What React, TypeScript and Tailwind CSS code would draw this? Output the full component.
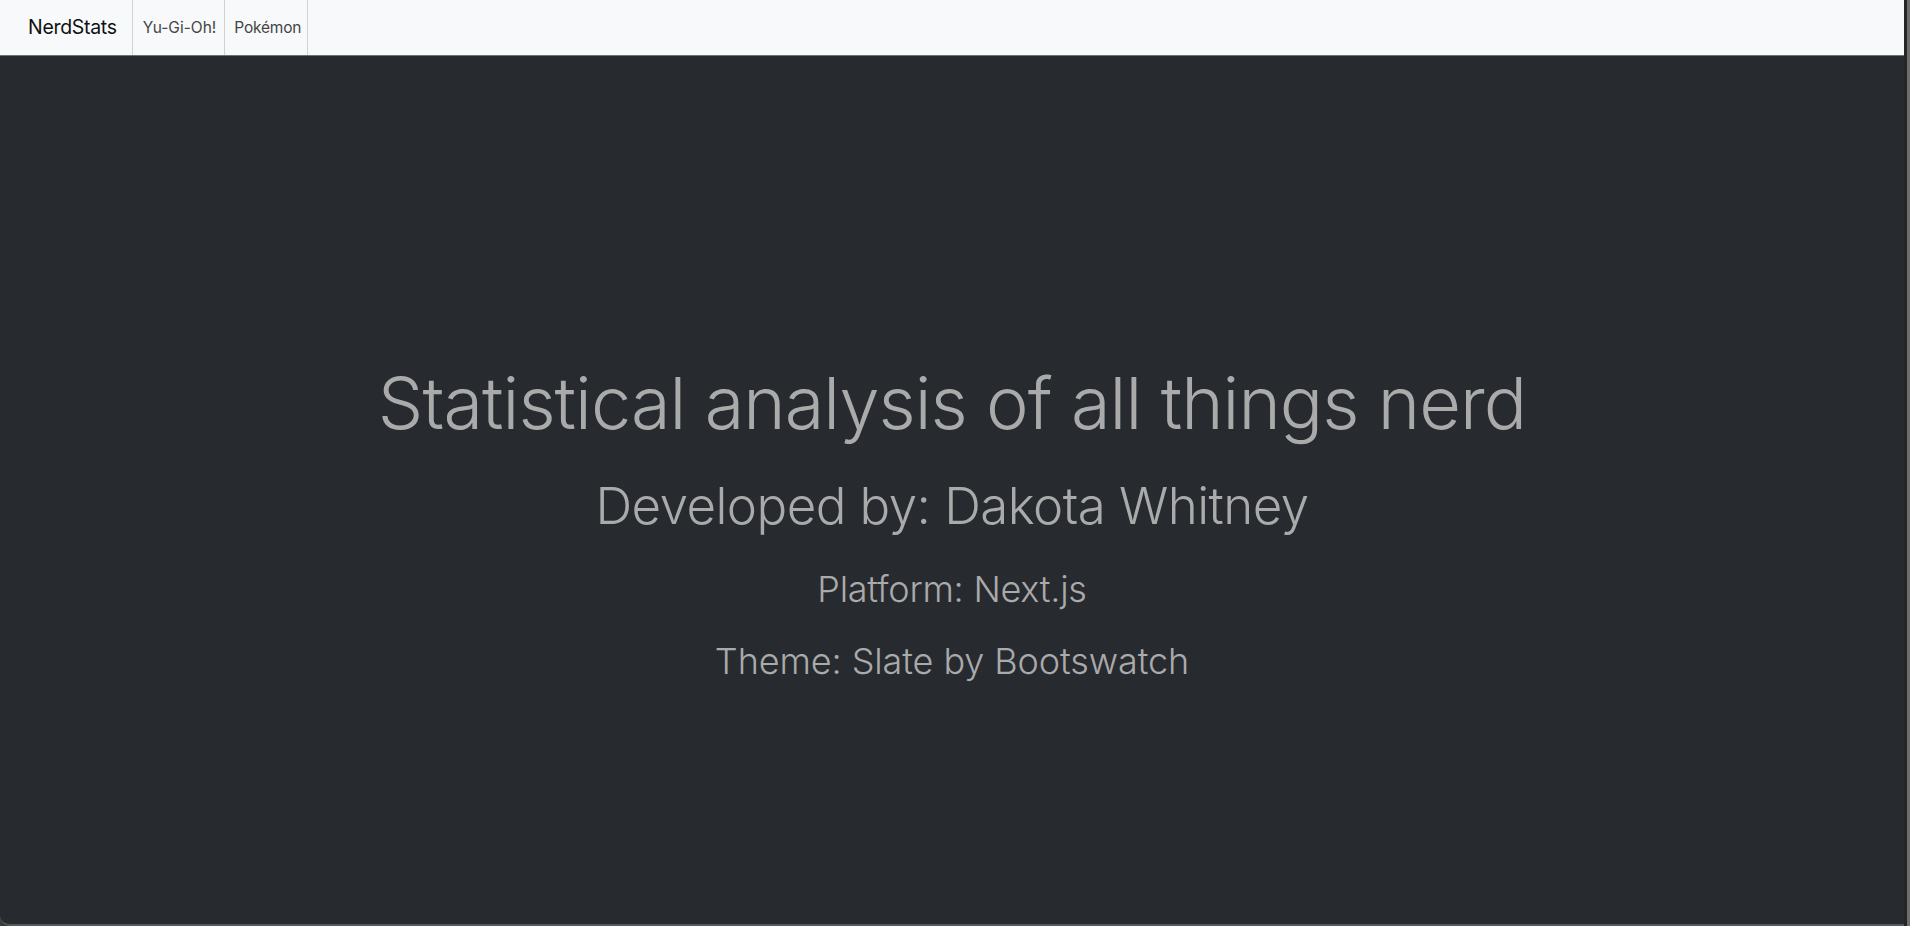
import React from 'react';

const font = { fontFamily: 'Inter, "Noto Sans", "Liberation Sans", sans-serif' };

function NavBar() {
    return (
        <nav className="flex h-[56px] items-stretch bg-[#f8f9fa] border-b border-[#6c6f73]">
            <a className="flex items-center pl-[28px] pr-[15px] text-[19.5px] text-[#111] tracking-[-0.3px]">
                NerdStats
            </a>
            <div className="flex items-stretch border-l border-[#cfd1d3]">
                <a className="flex items-center pl-[10px] pr-[8px] text-[15.5px] text-[#444] border-r border-[#cfd1d3]">
                    Yu-Gi-Oh!
                </a>
                <a className="flex items-center pl-[9px] pr-[6px] text-[15.5px] text-[#444] tracking-[-0.2px] border-r border-[#cfd1d3]">
                    Pokémon
                </a>
            </div>
        </nav>
    );
}

export default function App() {
    return (
        <div className="h-[926px] w-[1910px] bg-[#3a3a3a] overflow-hidden" style={font}>
            <div className="flex h-full">
                <div className="flex flex-1 flex-col bg-[#272b30] rounded-bl-[10px] border-b-2 border-[#55595e] overflow-hidden">
                    <NavBar />
                    <main className="flex flex-1 flex-col items-center pt-[304px] text-[#aaaaaa] font-light">
                        <h1 className="text-[72px] leading-[1.2] tracking-[-0.95px]">
                            Statistical analysis of all things nerd
                        </h1>
                        <h2 className="mt-[29px] text-[51px] leading-[1.2] tracking-[-0.55px]">
                            Developed by: Dakota Whitney
                        </h2>
                        <h3 className="mt-[31px] text-[36px] leading-[1.2] tracking-[-0.25px]">
                            Platform: Next.js
                        </h3>
                        <h3 className="mt-[29px] text-[36px] leading-[1.2] tracking-[-0.1px]">
                            Theme: Slate by Bootswatch
                        </h3>
                    </main>
                </div>
                <div className="w-[3px] bg-[#262626]" />
                <div className="w-[3px] bg-[#6e6e6e]" />
            </div>
        </div>
    );
}
